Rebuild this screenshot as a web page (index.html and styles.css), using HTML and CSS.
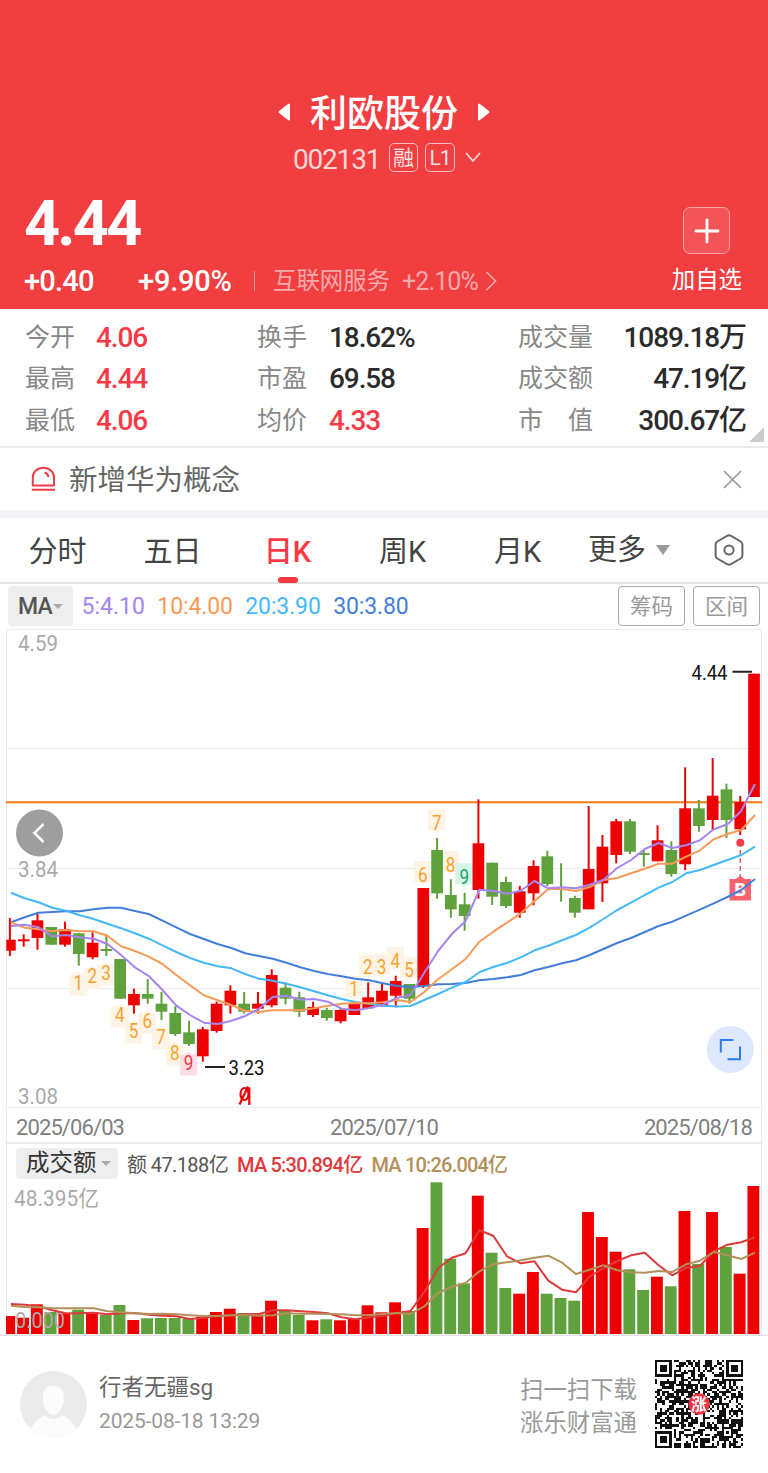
FILE: index.html
```
<!DOCTYPE html>
<html lang="zh-CN">
<head>
  <meta charset="UTF-8">
  <title>利欧股份 002131</title>
  <link rel="stylesheet" href="styles.css">
</head>
<body>
  <header class="header">
    <div class="title-row">
      <svg width="13" height="18" viewBox="0 0 13 18"><path d="M11 1.5V16.5L1.5 9Z" fill="#fff" stroke="#fff" stroke-width="2" stroke-linejoin="round"/></svg>
      <h1>利欧股份</h1>
      <svg width="13" height="18" viewBox="0 0 13 18"><path d="M2 1.5V16.5L11.5 9Z" fill="#fff" stroke="#fff" stroke-width="2" stroke-linejoin="round"/></svg>
    </div>
    <div class="code-row">
      <span class="code">002131</span>
      <span class="badge">融</span>
      <span class="badge badge-l1">L1</span>
      <svg width="16" height="11" viewBox="0 0 16 11"><path d="M1 1L8 9L15 1" fill="none" stroke="#fcd5d5" stroke-width="1.8"/></svg>
    </div>
    <div class="quote">
      <div class="quote-left">
        <div class="price">4.44</div>
        <div class="change-row">
          <span class="change">+0.40</span>
          <span class="percent">+9.90%</span>
          <span class="divider"></span>
          <span class="sector">互联网服务</span>
          <span class="sector-change">+2.10%</span>
          <svg width="12" height="20" viewBox="0 0 12 20"><path d="M1.5 1L10.5 10L1.5 19" fill="none" stroke="#f9a9aa" stroke-width="1.7"/></svg>
        </div>
      </div>
      <div class="add">
        <div class="add-btn">
          <svg width="26" height="26" viewBox="0 0 26 26"><path d="M13 2V24M2 13H24" stroke="#fff" stroke-width="2.8" stroke-linecap="round"/></svg>
        </div>
        <span>加自选</span>
      </div>
    </div>
  </header>

  <section class="stats">
    <span class="label">今开</span><span class="num red">4.06</span>
    <span class="label">换手</span><span class="num">18.62%</span>
    <span class="label">成交量</span><span class="num right">1089.18万</span>
    <span class="label">最高</span><span class="num red">4.44</span>
    <span class="label">市盈</span><span class="num">69.58</span>
    <span class="label">成交额</span><span class="num right">47.19亿</span>
    <span class="label">最低</span><span class="num red">4.06</span>
    <span class="label">均价</span><span class="num red">4.33</span>
    <span class="label">市　值</span><span class="num right">300.67亿</span>
    <i class="corner"></i>
  </section>

  <section class="notice">
    <svg width="26" height="26" viewBox="0 0 26 26" fill="none" stroke="#f23c49" stroke-width="2">
      <path d="M2.8 19.5V11.5A10.600 9.800 0 0 1 24 11.5V19.5Z" stroke-linejoin="round"/>
      <path d="M1.8 23.8H25M14.500 6.500Q18 7.500 18.500 11"/>
    </svg>
    <span>新增华为概念</span>
    <svg class="close" width="19" height="19" viewBox="0 0 19 19"><path d="M1 1L18 18M18 1L1 18" stroke="#999" stroke-width="1.7"/></svg>
  </section>

  <nav class="tabs">
    <a>分时</a>
    <a>五日</a>
    <a class="active">日K</a>
    <a>周K</a>
    <a>月K</a>
    <a class="more">更多 <i class="caret"></i></a>
    <svg width="30" height="32" viewBox="0 0 30 32" fill="none" stroke="#666" stroke-width="2">
      <path d="M13 1.9Q15 .8 17 1.9L26.7 7.5Q28.4 8.6 28.4 10.5V21.5Q28.4 23.4 26.7 24.5L17 30.1Q15 31.2 13 30.1L3.3 24.5Q1.6 23.4 1.6 21.5V10.5Q1.6 8.6 3.3 7.5Z"/>
      <circle cx="15" cy="16" r="4.6"/>
    </svg>
  </nav>

  <div class="ma-bar">
    <span class="select">MA<i class="caret small"></i></span>
    <span class="ma5">5:4.10</span>
    <span class="ma10">10:4.00</span>
    <span class="ma20">20:3.90</span>
    <span class="ma30">30:3.80</span>
    <span class="btn first">筹码</span>
    <span class="btn">区间</span>
  </div>

  <svg id="kline" class="chart" width="768" height="480" viewBox="0 628 768 480"></svg>

  <div class="dates"><span>2025/06/03</span><span>2025/07/10</span><span>2025/08/18</span></div>

  <div class="vol-bar">
    <span class="select">成交额<i class="caret small"></i></span>
    <span class="amount">额 47.188亿</span>
    <span class="vma5">MA 5:30.894亿</span>
    <span class="vma10">MA 10:26.004亿</span>
  </div>
  <svg id="volume" class="chart" width="768" height="155" viewBox="0 1181 768 155"></svg>

  <footer class="footer">
    <svg width="67" height="67" viewBox="0 0 67 67">
      <defs><clipPath id="avatar"><circle cx="33.5" cy="33.5" r="33.5"/></clipPath></defs>
      <g clip-path="url(#avatar)">
        <rect width="67" height="67" fill="#ebebeb"/>
        <path d="M23 27C22 18 27 15 33.5 15C40 15 44 18 43.5 27Q45 31 42.5 34Q41 39 38.5 42Q33.5 46 28.5 42Q25 39 24 34Q22 31 23 27Z" fill="#fcfcfc"/>
        <path d="M8 67Q10 52 25 44Q33.5 52 42 44Q56 50 59 67Z" fill="#fcfcfc"/>
      </g>
    </svg>
    <div class="user">
      <div class="name">行者无疆sg</div>
      <div class="time">2025-08-18 13:29</div>
    </div>
    <div class="download">扫一扫下载<br>涨乐财富通</div>
    <svg id="qr" width="88" height="88" viewBox="0 0 37 37" shape-rendering="crispEdges"></svg>
  </footer>

  <script src="chart.js"></script>
</body>
</html>
```
FILE: styles.css
```
body {
  margin: 0;
  width: 768px;
  background: #fff;
  color: #333;
  font-family: Roboto, "Noto Sans CJK SC", sans-serif;
}

svg {
  display: block;
  flex: none;
}

.header {
  height: 309px;
  box-sizing: border-box;
  padding-top: 90px;
  background: #f03e41;
  color: #fff;
}

.title-row {
  display: flex;
  justify-content: center;
  align-items: center;
  gap: 19px;
  height: 44px;
}

h1 {
  margin: 0;
  padding-top: 5px;
  font-size: 37px;
  line-height: 44px;
  font-weight: 500;
}

.code-row {
  display: flex;
  align-items: center;
  height: 46px;
  padding-left: 293px;
}

.code {
  width: 96px;
  padding-top: 4px;
  font-size: 28px;
  letter-spacing: -1.2px;
  color: #fcd5d5;
}

.badge {
  box-sizing: border-box;
  width: 29px;
  height: 29px;
  margin-right: 7px;
  border: 1.5px solid #fac0c1;
  border-radius: 5px;
  font-size: 21px;
  line-height: 28px;
  text-align: center;
  color: #fde3e3;
}

.badge-l1 {
  width: 30px;
  margin-right: 10px;
  letter-spacing: -1px;
}

.quote {
  display: flex;
  justify-content: space-between;
  padding: 0 26px 0 24px;
}

.price {
  height: 84px;
  font-size: 63px;
  line-height: 88px;
  font-weight: 700;
  letter-spacing: -2.8px;
}

.change-row {
  display: flex;
  align-items: center;
  height: 34px;
  font-size: 29px;
  font-weight: 500;
}

.change {
  width: 114px;
  letter-spacing: -.8px;
}

.percent {
  width: 116px;
  letter-spacing: -.2px;
}

.divider {
  width: 1px;
  height: 20px;
  margin-right: 18px;
  background: #f88f91;
}

.sector, .sector-change {
  font-size: 23.4px;
  font-weight: 400;
  color: #f9a9aa;
}

.sector {
  width: 129px;
  line-height: 32px;
}

.sector-change {
  width: 83px;
  font-size: 25px;
  letter-spacing: -.9px;
}

.add {
  display: flex;
  flex-direction: column;
  align-items: center;
  padding-top: 27px;
  font-size: 23.4px;
  line-height: 34px;
}

.add-btn {
  display: flex;
  align-items: center;
  justify-content: center;
  box-sizing: border-box;
  width: 47px;
  height: 47px;
  margin-bottom: 9px;
  border: 1.5px solid #f8a5a6;
  border-radius: 7px;
  background: #f25457;
}

.stats {
  position: relative;
  display: grid;
  grid-template-columns: 71px 161px 72px 189px 88px 1fr;
  grid-auto-rows: 41.5px;
  align-items: center;
  box-sizing: border-box;
  height: 139px;
  padding: 7px 22px 0 25px;
  border-bottom: 2px solid #ebebeb;
}

.label {
  padding-top: 2px;
  font-size: 25px;
  line-height: 36px;
  color: #888;
}

.num {
  padding-top: 2px;
  font-size: 28px;
  line-height: 36px;
  font-weight: 500;
  letter-spacing: -1.1px;
  white-space: nowrap;
  color: #2b2b2b;
}

.right {
  text-align: right;
}

.red {
  color: #f93a46;
}

.corner {
  position: absolute;
  right: 4px;
  bottom: 4px;
  border-left: 15px solid transparent;
  border-bottom: 15px solid #ccc;
}

.notice {
  display: flex;
  align-items: center;
  box-sizing: border-box;
  height: 70px;
  padding: 0 26px 0 30px;
  border-bottom: 8px solid #f3f4f9;
  font-size: 28.5px;
  line-height: 40px;
  color: #666;
}

.notice span {
  margin-left: 13px;
  padding-top: 4px;
}

.close {
  margin-left: auto;
}

.tabs {
  display: flex;
  align-items: center;
  box-sizing: border-box;
  height: 66px;
  border-bottom: 2px solid #e3e3e3;
  font-size: 29px;
  line-height: 69px;
  color: #444;
}

.tabs a {
  width: 115px;
  height: 64px;
  text-align: center;
}

.tabs .active {
  position: relative;
  font-weight: 500;
  color: #f93a46;
}

.active::after {
  content: "";
  position: absolute;
  left: 48px;
  bottom: -1px;
  width: 20px;
  height: 6px;
  border-radius: 3px;
  background: #f93a46;
}

.tabs .more {
  display: flex;
  align-items: center;
  width: 126px;
  height: 68px;
  padding-left: 13px;
}

.caret {
  margin-left: 10px;
  border: 7.5px solid transparent;
  border-top: 10px solid #999;
  border-bottom: 0;
}

.caret.small {
  margin-left: 4px;
  border-width: 5px;
  border-top: 5px solid #aaa;
  border-bottom: 0;
}

.ma-bar {
  display: flex;
  align-items: center;
  gap: 12.5px;
  height: 44px;
  padding: 0 8px;
  font-size: 23px;
}

.select {
  display: flex;
  align-items: center;
  border-radius: 4px;
  background: #eee;
  color: #555;
}

.ma-bar .select {
  box-sizing: border-box;
  width: 65px;
  height: 40px;
  margin-right: -4px;
  padding-left: 10px;
  font-weight: 500;
  letter-spacing: -.8px;
}

.ma-bar .select .caret {
  margin-left: 1px;
}

.ma5 { color: #a585ef; }
.ma10 { color: #f99a56; }
.ma20 { color: #45b9f7; }
.ma30 { color: #427fdd; }

.ma-bar .ma10, .ma-bar .ma20, .ma-bar .ma30 {
  letter-spacing: -.12px;
}

.btn {
  box-sizing: border-box;
  width: 67px;
  height: 40px;
  margin-left: -4.5px;
  border: 1.5px solid #aaa;
  border-radius: 4px;
  font-size: 21.5px;
  line-height: 39px;
  text-align: center;
  color: #999;
}

.btn.first {
  margin-left: auto;
}

.dates {
  display: flex;
  justify-content: space-between;
  box-sizing: border-box;
  height: 36px;
  margin: 0 6px;
  padding: 0 9px;
  border: 1px solid #ececec;
  border-bottom-width: 2px;
  border-top: 0;
  font-size: 22px;
  line-height: 39px;
  letter-spacing: -.9px;
  color: #808080;
}

.vol-bar {
  display: flex;
  align-items: center;
  gap: 9px;
  box-sizing: border-box;
  height: 37px;
  margin: 0 6px;
  padding: 1px 9px 0;
  border: solid #ececec;
  border-width: 0 1px;
  font-size: 20px;
  letter-spacing: -.6px;
  color: #555;
}

.vol-bar .select {
  box-sizing: border-box;
  width: 102px;
  height: 31px;
  padding-left: 10px;
  font-size: 23.5px;
  line-height: 30px;
  letter-spacing: 0;
  color: #333;
}

.vma5, .vma10 {
  font-weight: 500;
  letter-spacing: -.8px;
}

.vma5 { color: #e0393b; }
.vma10 { color: #b3905a; }

.chart text {
  font-family: Roboto, "Noto Sans CJK SC", sans-serif;
}

.footer {
  display: flex;
  align-items: center;
  height: 136px;
  padding: 0 25px 0 20px;
}

.user {
  margin-left: 12px;
}

.name {
  font-size: 22.5px;
  line-height: 34px;
  color: #666;
}

.time {
  font-size: 21px;
  line-height: 34px;
  letter-spacing: -.15px;
  color: #999;
}

.download {
  margin: 0 18px 0 auto;
  padding-top: 5px;
  font-size: 23.4px;
  line-height: 33px;
  color: #999;
}
```
FILE: chart.js
```
// color, high, body top, body bottom, low
const candles = [
  ["r",918,939.7,950.7,956],["r",934.3,939.3,941.3,946.7],["r",912.7,920.3,938,949.7],["g",927,927,944.7,944.7],
  ["r",921.7,929.3,944.7,946.7],["g",933.3,933.3,954,965.7],["r",932.3,942.7,957.3,959.3],["g",934.3,949,951,956],
  ["g",959,959,998.7,998.7],["r",988.7,994,1005.3,1013.7],["g",979,994,998.7,1003.7],["g",992,1003.7,1011.7,1020],
  ["g",1006.3,1013,1034,1036],["g",1020.7,1032.3,1044,1046],["r",1027,1029.3,1056.3,1061.7],["r",1001.7,1003.7,1031,1032.7],
  ["r",985.3,990.7,1005.3,1013.7],["g",992,1003.7,1011.7,1013.7],["r",992,1003.7,1008.7,1013.7],["r",969.3,975,1005.3,1007.3],
  ["g",982.3,987.7,998.7,1004.3],["g",991.7,997.3,1011.7,1017],["r",1001.7,1007,1015,1017],["g",1007.7,1010,1018,1020.7],
  ["r",1008.3,1010,1021.3,1023.3],["r",1003.7,1003.7,1015,1015],["r",982.3,997.3,1008.3,1009],["r",983.3,990.7,1005.3,1006.7],
  ["r",975.7,981,995.7,1007.3],["g",984,984,998.7,1003.7],["r",888,888,986,988],["g",838,850,893.3,898.7],
  ["g",879.3,895,909.3,917.7],["g",892.7,904.3,916,930.7],["r",799.3,843.3,890,898.7],["g",862.7,862.7,896.7,905],
  ["g",876.7,882,906,908],["r",886,891.3,912.7,917.7],["r",860.3,866,893.3,905.3],["g",850.7,856.3,884,886],
  ["g",863.3,888,889,901.7],["g",895.7,898,912.7,917.7],["r",806,869,909.3,909.3],["r",835,846.7,883.3,902],
  ["r",819,821.3,855,863.3],["g",819,821.3,851.7,854],["g",850,853,855,866.7],["r",825.3,840.3,861.3,861.3],
  ["g",841.3,850,874,876.7],["r",767.3,808.3,864.3,870],["g",800,808.3,826,831.7],["r",758,795.7,820,830.7],
  ["g",783.7,789.3,820,838],["r",796,802,829.3,835],["r",673.7,673.7,797,797]
];

const ma5 = [926,924.7,927.3,936.3,935,937.3,938.7,944,955,967.3,976,990,1005.7,1015,1022.7,1024,1020.7,1016,1009,997,995.7,999.7,999,1001.7,1008.7,1010.3,1008,1004.7,998,995,972.7,951,934,921,889.7,891,893.7,890.7,881,888.3,887.3,888.3,884.7,880,868,860,849,843,848,845.3,840.3,829.3,824.3,811,784];
const ma10 = [922.3,927.7,929.3,931.3,930,931.3,931.3,935.7,946.3,951,956.7,964,975,985.3,995.3,1000.3,1005,1011,1012,1010.3,1010.3,1010.3,1008.3,1005.7,1003.7,1003,1003.3,1002.3,1000,1002,992,979.3,969.3,959,941.7,931.7,922.7,913.3,901,889,889,891,887,880,878,873.3,868.7,863.7,863.7,856.7,850.3,839.3,834,830,815];
const ma20 = [892.7,898.3,902.3,907.7,910.7,915.3,919,923.7,928.3,933.3,938.7,945.3,952,958,962.7,966.3,968.3,974,978.7,980.7,983.7,987.3,991.3,995.3,999,1002,1003.7,1005.7,1006.5,1006,1000,994,987.7,982,972.3,967,963,957.3,950.3,945.7,940.3,935,927.7,919,910,902.7,895,887.7,882,873.3,870,865,860,855,846.7];
const ma30 = [922.3,917.3,912.7,912,911.3,911.3,909.3,907.7,907.7,911,914,920.7,927.3,934,939,944,948,953.3,956,958.7,962.7,967.3,971,974,976.3,978.7,980.3,983.3,986,987,986,984.3,984,983,980.3,979,977.3,975,970.3,967,963.3,960.3,955,949,943,938,932,926,921.7,915.7,909.7,903.3,897,890,879];

const volumes = [1316,1317.7,1304.3,1312,1313.3,1309.7,1312.3,1315,1305,1320,1318.3,1318,1318,1319,1316.7,1312,1308.7,1313,1314.5,1300.7,1310.3,1315,1320.3,1319.3,1320.3,1319,1305.3,1312.3,1302.3,1311,1228,1182.3,1258.7,1283.3,1195.7,1252.7,1288,1293.7,1272,1293.7,1298,1300.7,1212,1237,1251.7,1269.3,1290,1276.7,1286.3,1211,1264,1212,1247,1273.7,1186];
const vma5 = [1304,1304.7,1306.3,1310.3,1313.3,1313.3,1312.7,1314.3,1313.3,1313,1314.7,1315.7,1316.3,1319,1317.7,1316,1315.3,1314.3,1314,1310.3,1310.3,1311.3,1312,1313.3,1317.3,1319.3,1317.3,1316,1313,1311,1292,1268.3,1257.7,1253.3,1230.3,1235.7,1256.3,1263.3,1261.3,1280.7,1289.7,1292.3,1276.3,1268.3,1261,1255.3,1252.7,1265.3,1275.3,1267.7,1266,1251.3,1244.7,1242.3,1237.3];
const vma10 = [1305.7,1307,1307.3,1308.3,1308.3,1308.3,1308.3,1311.3,1312.3,1313.3,1314,1313.7,1314.3,1315.3,1316,1316,1315.3,1315.3,1315.7,1315.3,1313.3,1313.7,1313.7,1314,1314.3,1315.3,1315,1314,1313,1314,1306.3,1293,1286.7,1283,1271.3,1264.3,1262.3,1260.3,1257.7,1255.7,1262.7,1274,1269.7,1265.3,1270.3,1272.3,1272.7,1271,1272,1264.3,1260.7,1252,1255.3,1259,1252.7];

// candle index, digit, center y, side of the candle
const marks = [
  [5,1,983,"low"],[6,2,976.7,"low"],[7,3,973.3,"low"],[8,4,1015,"low"],[9,5,1031,"low"],[10,6,1021.5,"low"],
  [11,7,1037.3,"low"],[12,8,1053,"low"],[13,9,1063,"low"],
  [25,1,989.7,"high"],[26,2,967.7,"high"],[27,3,967.7,"high"],[28,4,961,"high"],[29,5,970.7,"high"],[30,6,875,"high"],
  [31,7,823.3,"high"],[32,8,865,"high"],[33,9,877.3,"high"]
];

const colors = { r: "#ef0000", g: "#5fa13c" };
const x = i => 9.9 + 13.78 * i;

function line(data, color, dx) {
  const points = data.map((y, i) => `${(x(i) + dx).toFixed(1)},${y}`).join(" ");
  return `<polyline points="${points}" fill="none" stroke="${color}" stroke-width="2" stroke-linejoin="round"/>`;
}

function text(str, tx, ty, width, size, color) {
  return `<text x="${tx}" y="${ty}" font-size="${size}" fill="${color}" textLength="${width}" lengthAdjust="spacingAndGlyphs">${str}</text>`;
}

function drawKline() {
  let out = `<path d="M6.5 1108V629.5H761.5V1108M7 748.5H761M7 868.5H761M7 988.5H761M7 1107.5H761" fill="none" stroke="#ebebeb"/>`;
  out += `<path d="M6 802.3H762" stroke="#f47a10" stroke-width="2"/>`;

  marks.forEach(([i, n, y, side]) => {
    const c = x(i) - 0.5;
    const bg = n !== 9 ? "#fff3e6" : side === "low" ? "#ffdde0" : "#d5f3e6";
    const top = side === "low" ? y - 8.5 : y - 14;
    const tip = side === "low" ? `M${c - 4} ${top}l4 -3l4 3z` : `M${c - 4} ${top + 21}l4 3l4 -3z`;
    out += `<rect x="${c - 8.7}" y="${top}" width="17.4" height="21" fill="${bg}"/><path d="${tip}" fill="${bg}"/>`;
  });
  marks.forEach(([i, n, y, side]) => {
    const fg = n !== 9 ? "#f5a42a" : side === "low" ? "#e83c4c" : "#16a765";
    out += text(n, x(i) - 5.2, y + 6.6, 9.6, 20, fg);
  });

  candles.forEach(([c, high, top, bottom, low], i) => {
    const left = Math.max(x(i) - 5.85, 6.3);
    const w = i === 40 ? 2 : x(i) + 5.85 - left;
    out += `<rect x="${i === 40 ? x(i) - 1 : left}" y="${top}" width="${w}" height="${bottom - top}" fill="${colors[c]}"/>`;
    out += `<rect x="${x(i) - 1}" y="${high}" width="2" height="${low - high}" fill="${colors[c]}"/>`;
  });

  // buy marker
  out += `<circle cx="740.3" cy="842.7" r="4" fill="#f93a46"/>
    <path d="M740.3 850V876" stroke="#d9626c" stroke-width="1.4" stroke-dasharray="5 3"/>
    <path d="M729.5 879H736L740.3 875.5L744.6 879H751V900.5H729.5Z" fill="#fb626d"/>
    <text x="740.3" y="896" font-size="18" font-weight="900" text-anchor="middle" fill="#fff">B</text>`;

  out += line(ma30, "#427fdd", 1) + line(ma20, "#45b9f7", 1) + line(ma10, "#f79a58", 1) + line(ma5, "#a585ef", 1);

  out += text("4.59", 18, 651, 40, 22, "#aaa") + text("3.84", 18, 877, 40, 22, "#aaa") + text("3.08", 18, 1103.5, 40, 22, "#aaa");
  out += text("4.44", 691.5, 680, 36, 20, "#111") + `<path d="M732.5 671.7H752M205 1067H225" stroke="#222" stroke-width="2"/>`;
  out += text("3.23", 228.5, 1074.5, 36, 20, "#111");
  out += `<ellipse cx="244.5" cy="1094" rx="4" ry="6" fill="none" stroke="#ef0000" stroke-width="2.2"/>
    <path d="M249.3 1087.5V1105M239.5 1104.5L248 1086.5" stroke="#ef0000" stroke-width="2.2"/>`;

  // floating buttons
  out += `<circle cx="39.5" cy="833" r="23.5" fill="#9e9e9e"/><path d="M43.5 824L34.5 833L43.5 842" fill="none" stroke="#fff" stroke-width="2.6"/>`;
  out += `<circle cx="730.3" cy="1049.5" r="23.5" fill="#dde8fd"/><path d="M720.8 1052.5V1040H733.5M727.5 1059.3H740V1046.5" fill="none" stroke="#2b7bf6" stroke-width="2"/>`;
  document.getElementById("kline").innerHTML = out;
}

function drawVolume() {
  let out = `<path d="M6.5 1181V1335M761.5 1181V1335" stroke="#ebebeb"/><path d="M0 1335.2H768" stroke="#e3e3e3" stroke-width="1.6"/>`;
  volumes.forEach((y, i) => {
    const left = Math.max(x(i) - 6.6, 6);
    out += `<rect x="${left}" y="${y}" width="${x(i) + 5.3 - left}" height="${1334 - y}" fill="${colors[candles[i][0]]}"/>`;
  });
  out += text("48.395亿", 14, 1206, 85, 22, "#aaa");
  out += text("0.000", 15, 1327.5, 50, 22, "#aaa");
  out += line(vma5, "#e0393b", 1) + line(vma10, "#b3905a", 1);
  document.getElementById("volume").innerHTML = out;
}

function drawQr() {
  const n = 37;
  let seed = 2131;
  let d = "";
  const inFinder = (r, c) => (r < 8 && c < 8) || (r < 8 && c > n - 9) || (r > n - 9 && c < 8);
  for (let r = 0; r < n; r++) {
    for (let c = 0; c < n; c++) {
      seed = (seed * 48271) % 2147483647;
      if (!inFinder(r, c) && seed % 100 < 55) d += `M${c} ${r}h1v1h-1z`;
    }
  }
  let out = `<path d="${d}" fill="#111"/>`;
  [[0, 0], [n - 7, 0], [0, n - 7], [28, 28]].forEach(([c, r], k) => {
    const s = k < 3 ? 7 : 5;
    out += `<rect x="${c}" y="${r}" width="${s}" height="${s}" fill="#111"/><rect x="${c + 1}" y="${r + 1}" width="${s - 2}" height="${s - 2}" fill="#fff"/>`;
    out += `<rect x="${c + 2}" y="${r + 2}" width="${s - 4}" height="${s - 4}" fill="#111"/>`;
  });
  out += `<circle cx="18.5" cy="18.5" r="4.5" fill="#ea3443" shape-rendering="auto"/>`;
  out += `<text x="18.5" y="20.9" font-size="6.5" font-weight="700" text-anchor="middle" fill="#fff">涨</text>`;
  document.getElementById("qr").innerHTML = out;
}

drawKline();
drawVolume();
drawQr();
```
